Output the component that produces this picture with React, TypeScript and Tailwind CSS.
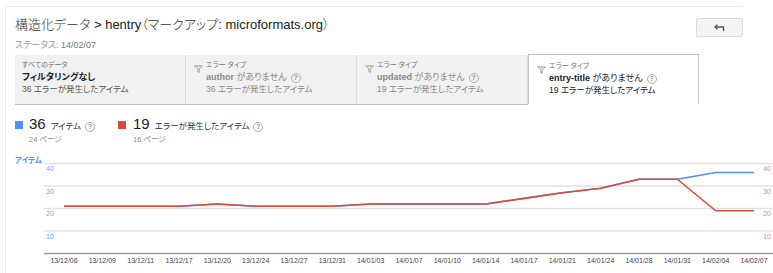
import React from "react";

const FONT = "font-['Liberation_Sans','Noto_Sans_CJK_JP',sans-serif] [font-feature-settings:'palt']";

const dates = [
  "13/12/06", "13/12/09", "13/12/11", "13/12/17", "13/12/20", "13/12/24", "13/12/27",
  "13/12/31", "14/01/03", "14/01/07", "14/01/10", "14/01/14", "14/01/17", "14/01/21",
  "14/01/24", "14/01/28", "14/01/31", "14/02/04", "14/02/07",
];
const red = [21, 21, 21, 21, 22, 21, 21, 21, 22, 22, 22, 22, 24.5, 27, 29, 33, 33, 19, 19];
const blue = [21, 21, 21, 21, 22, 21, 21, 21, 22, 22, 22, 22, 24.5, 27, 29, 33, 33, 36, 36];

const X0 = 63;
const DX = (753 - 63) / 18;
const yOf = (v: number) => 253.5 - v * 2.25;
const pts = (arr: number[]) => arr.map((v, i) => `${X0 + i * DX},${yOf(v)}`).join(" ");

function Help() {
  return (
    <span className="inline-flex w-[10px] h-[10px] rounded-full border border-[#b0b0b0] text-[7px] leading-none items-center justify-center text-[#999] align-middle ml-[4px] font-bold">
      ?
    </span>
  );
}

function Funnel() {
  return (
    <svg width="9" height="8" viewBox="0 0 9 8" className="shrink-0 mt-[5px]">
      <path d="M0.5 0.8 H8.5 L5.3 4 V7.5 L3.7 6.6 V4 Z" fill="#e0e0e0" stroke="#999" strokeWidth="0.8" strokeLinejoin="round" />
    </svg>
  );
}

function Tab({
  small,
  title,
  count,
  filter,
  active,
  gray,
}: {
  small: string;
  title: React.ReactNode;
  count: string;
  filter?: boolean;
  active?: boolean;
  gray?: boolean;
}) {
  const base = active
    ? "bg-white border-t border-l border-r border-[#c4c4c4] h-[50px]"
    : "bg-[#f1f1f1] border-b border-[#c0c0c0] border-r border-r-[#dcdcdc] h-[50px] mt-[1px]";
  return (
    <div className={`w-[171px] shrink-0 ${base} flex ${filter ? "pl-[8px] gap-[3px]" : "pl-[7px]"} ${active ? "pt-[6px]" : "pt-[5px]"}`}>
      {filter && <Funnel />}
      <div className="flex flex-col">
        <div className="text-[7px] leading-[10px] text-[#777]">{small}</div>
        <div className={`text-[9px] leading-[12px] mt-[1px] ${gray ? "text-[#8a8a8a]" : "text-[#222]"}`}>{title}</div>
        <div className={`text-[8.5px] leading-[12px] ${gray ? "text-[#8a8a8a]" : active ? "text-[#222]" : "text-[#555]"}`}>{count}</div>
      </div>
    </div>
  );
}

export default function App() {
  return (
    <div className={`w-[773px] h-[273px] bg-white overflow-hidden ${FONT}`}>
      <div className="ml-[5px] mt-[6px] w-[738px] h-[267px] border-l border-t border-[#ececec] flex flex-col">
        <div className="flex justify-between">
          <div className="pl-[9px] pt-[10px]">
            <div className="text-[13px] leading-[16px] text-[#222] whitespace-nowrap">
              <span className="font-light text-[#333]">構造化データ</span> &gt; hentry
              <span className="font-light text-[#333]">（マークアップ</span>: microformats.org
              <span className="font-light text-[#333]">）</span>
            </div>
            <div className="text-[9px] leading-[12px] mt-[6px] text-[#999]">
              ステータス: <span className="text-[#777]">14/02/07</span>
            </div>
          </div>
          <button className="mt-[11px] w-[47px] h-[19px] bg-[#f5f5f5] border border-[#dcdcdc] rounded-[2px] flex items-center justify-center">
            <svg width="11" height="8" viewBox="0 0 11 8">
              <path d="M3.5 0.8 L0.8 3 L3.5 5.2" fill="none" stroke="#555" strokeWidth="1.4" strokeLinejoin="round" />
              <path d="M1 3 H9.5 V7" fill="none" stroke="#555" strokeWidth="1.4" />
            </svg>
          </button>
        </div>

        <div className="flex pl-[9px] mt-[3px]">
          <Tab
            small="すべてのデータ"
            title={<span className="font-bold">フィルタリングなし</span>}
            count="36 エラーが発生したアイテム"
          />
          <Tab
            filter
            gray
            small="エラー タイプ"
            title={
              <span>
                <span className="font-bold">author</span> がありません<Help />
              </span>
            }
            count="36 エラーが発生したアイテム"
          />
          <Tab
            filter
            gray
            small="エラー タイプ"
            title={
              <span>
                <span className="font-bold">updated</span> がありません<Help />
              </span>
            }
            count="19 エラーが発生したアイテム"
          />
          <Tab
            filter
            active
            small="エラー タイプ"
            title={
              <span>
                <span className="font-bold">entry-title</span> がありません<Help />
              </span>
            }
            count="19 エラーが発生したアイテム"
          />
        </div>

        <div className="flex pl-[9px] mt-[11px]">
          <div className="flex w-[103px]">
            <div className="w-[8px] h-[8px] bg-[#4d90fe] mt-[5px] mr-[6px]" />
            <div className="flex flex-col">
              <div className="flex items-baseline whitespace-nowrap">
                <span className="text-[15px] leading-[16px] text-[#222]">36</span>
                <span className="text-[8.5px] ml-[5px] text-[#333]">アイテム</span>
                <Help />
              </div>
              <div className="text-[7.5px] leading-[10px] mt-[2px] text-[#888]">24 ページ</div>
            </div>
          </div>
          <div className="flex">
            <div className="w-[8px] h-[8px] bg-[#dd4b39] mt-[5px] mr-[7px]" />
            <div className="flex flex-col">
              <div className="flex items-baseline whitespace-nowrap">
                <span className="text-[15px] leading-[16px] text-[#222]">19</span>
                <span className="text-[8.5px] ml-[5px] text-[#333]">エラーが発生したアイテム</span>
                <Help />
              </div>
              <div className="text-[7.5px] leading-[10px] mt-[2px] text-[#888]">16 ページ</div>
            </div>
          </div>
        </div>

        <svg width="768" height="123" viewBox="5 150 768 123" className="mt-auto overflow-visible">
          <text x="14" y="162.5" fontSize="7.5" fontWeight="bold" fill="#4d90fe" fontFamily="Liberation Sans, Noto Sans CJK JP, sans-serif">アイテム</text>
          {[163.5, 186, 208.5, 231].map((y) => (
            <line key={y} x1="43" x2="773" y1={y} y2={y} stroke="#e2e2e2" strokeWidth="1.5" />
          ))}
          <line x1="43" x2="773" y1="253.5" y2="253.5" stroke="#9a9a9a" strokeWidth="1.5" />
          {[40, 30, 20, 10].map((v) => (
            <g key={v}>
              <text x="45" y={yOf(v) + 7.5} fontSize="7" fill="#6fa3f7" fontFamily="Liberation Sans, sans-serif">{v}</text>
              <text x="770" y={yOf(v) + 7.5} fontSize="7" fill="#ea8a6c" textAnchor="end" fontFamily="Liberation Sans, sans-serif">{v}</text>
            </g>
          ))}
          {dates.map((d, i) => (
            <text key={d} x={X0 + i * DX} y="263" fontSize="7" fill="#444" textAnchor="middle" fontFamily="Liberation Sans, sans-serif">{d}</text>
          ))}
          <polyline points={pts(blue)} fill="none" stroke="#4d90fe" strokeWidth="1.6" strokeLinejoin="round" />
          <polyline points={pts(red)} fill="none" stroke="#dd4b39" strokeWidth="1.6" strokeLinejoin="round" />
        </svg>
      </div>
    </div>
  );
}
